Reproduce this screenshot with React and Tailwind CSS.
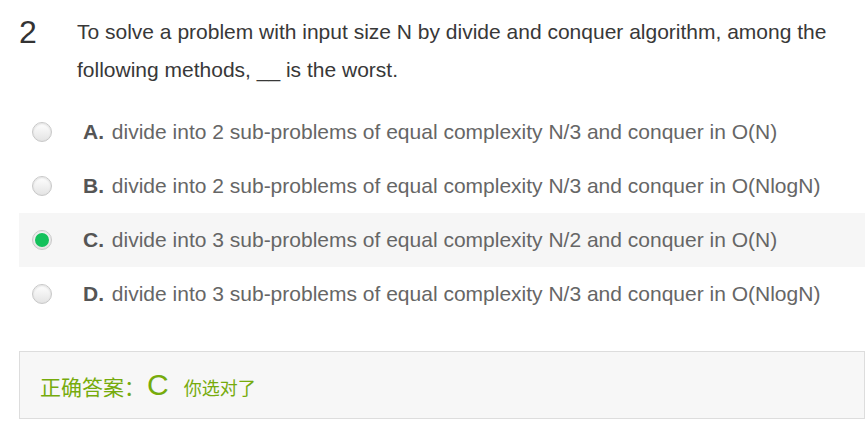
const options = [
  { key: 'A', text: 'divide into 2 sub-problems of equal complexity N/3 and conquer in O(N)' },
  { key: 'B', text: 'divide into 2 sub-problems of equal complexity N/3 and conquer in O(NlogN)' },
  { key: 'C', text: 'divide into 3 sub-problems of equal complexity N/2 and conquer in O(N)', checked: true },
  { key: 'D', text: 'divide into 3 sub-problems of equal complexity N/3 and conquer in O(NlogN)' },
];

function Radio({ checked }) {
  return (
    <span className="w-[20px] h-[20px] rounded-full border border-[#c8c8c8] bg-gradient-to-b from-[#ffffff] to-[#e4e4e4] shadow-[inset_0_1px_2px_rgba(0,0,0,0.12)] flex items-center justify-center shrink-0">
      {checked && <span className="w-[14px] h-[14px] rounded-full bg-[#13c15b]" />}
    </span>
  );
}

export default function App() {
  return (
    <div className="w-[865px] h-[426px] bg-white overflow-hidden pl-[19px] pt-[13px] font-['Liberation_Sans','Noto_Sans_CJK_SC',sans-serif]">
      <div className="flex">
        <div className="w-[58px] text-[32px] leading-[38px] text-[#333]">2</div>
        <p className="text-[21px] leading-[38px] text-[#383838] w-[785px]">
          To solve a problem with input size N by divide and conquer algorithm, among the following methods, __ is the worst.
        </p>
      </div>

      <div className="mt-[16px]">
        {options.map((o) => (
          <div
            key={o.key}
            className={`h-[54px] flex items-center pl-[13px] ${o.checked ? 'bg-[#f6f6f6]' : ''}`}
          >
            <Radio checked={o.checked} />
            <span className="ml-[31px] text-[21px] text-[#666]">
              <b className="text-[#555] mr-[2px]">{o.key}.</b> {o.text}
            </span>
          </div>
        ))}
      </div>

      <div className="mt-[30px] h-[68px] border border-[#dddddd] bg-[#f7f7f7] flex items-center pl-[20px] text-[#76ab0c] font-['Noto_Sans_CJK_SC',sans-serif]">
        <span className="text-[21px] mt-[4px]">正确答案：</span>
        <span className="text-[30px] leading-none ml-[2px] font-['Liberation_Sans',sans-serif]">C</span>
        <span className="text-[18px] ml-[15px] mt-[4px]">你选对了</span>
      </div>
    </div>
  );
}
